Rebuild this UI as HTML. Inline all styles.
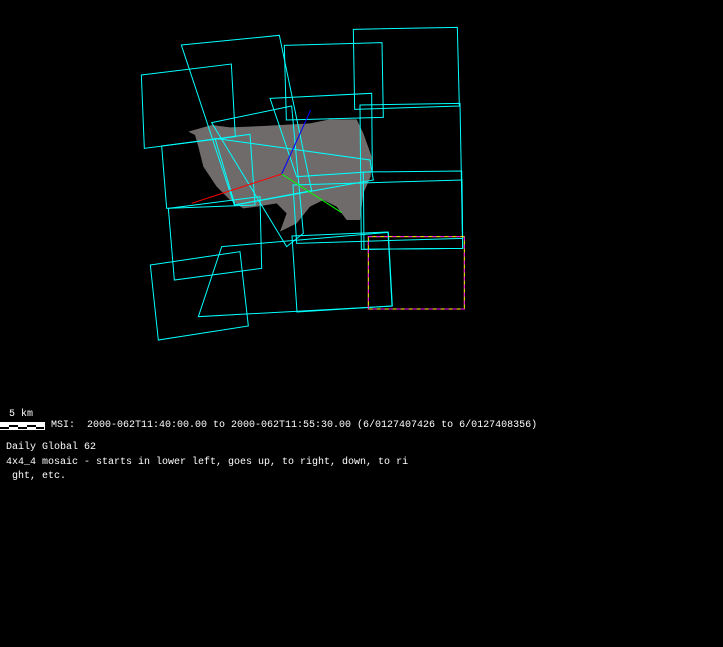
<!DOCTYPE html>
<html><head><style>
html,body{margin:0;padding:0;background:#000;width:723px;height:647px;overflow:hidden}
.t{position:absolute;font-family:"Liberation Mono",monospace;font-size:10px;color:#fff;white-space:pre;line-height:14.5px}
</style></head><body>
<svg width="723" height="647" style="position:absolute;left:0;top:0">
<g transform="translate(130,20) scale(0.33333)">
<polygon fill="#6f6b6b" points="175,335 245,315 300,322 400,318 540,310 600,298 680,298 700,340 725,410 722,470 700,520 690,600 650,600 620,560 580,540 540,560 500,610 450,635 470,580 440,550 380,560 340,565 300,540 260,500 220,440 205,380 195,345"/>
<g fill="none" stroke="#00ffff" stroke-width="3">
<polygon points="670,28 982,22 988,258 674,268"/>
<polygon points="463,76 756,68 760,292 469,300"/>
<polygon points="154,75 448,46 545,512 313,555"/>
<polygon points="34,165 304,132 316,350 43,385"/>
<polygon points="420,235 725,220 727,455 500,470"/>
<polygon points="690,255 990,250 998,685 694,688"/>
<polygon points="95,378 360,343 375,555 110,565"/>
<polygon points="115,565 390,530 395,745 133,780"/>
<polygon points="61,735 330,695 355,918 85,960"/>
<polygon points="275,680 775,637 787,858 205,890"/>
<polygon points="486,648 774,636 786,858 501,876"/>
<polygon points="489,495 996,480 998,655 500,670"/>
<polygon points="700,456 995,453 998,685 702,688"/>
<polygon points="245,308 485,258 520,640 470,680"/>
<polygon points="255,355 720,420 730,480 315,555"/>
</g>
<line x1="455" y1="462" x2="185" y2="550" stroke="#ff0000" stroke-width="3"/>
<line x1="455" y1="462" x2="635" y2="578" stroke="#00ff00" stroke-width="3"/>
<line x1="455" y1="462" x2="542" y2="270" stroke="#0000ff" stroke-width="3"/>
<rect x="715" y="650" width="288" height="217" fill="none" stroke="#ffff00" stroke-width="3"/>
<rect x="715" y="650" width="288" height="217" fill="none" stroke="#ff00ff" stroke-width="3" stroke-dasharray="12,12"/>
</g>
<line x1="0" y1="422.5" x2="45" y2="422.5" stroke="#fff"/>
<rect x="0" y="423" width="45" height="7" fill="#fff"/>
<rect x="9" y="425" width="9" height="2" fill="#000"/>
<rect x="27" y="425" width="9" height="2" fill="#000"/>
<rect x="0" y="427" width="9" height="2" fill="#000"/>
<rect x="18" y="427" width="9" height="2" fill="#000"/>
<rect x="36" y="427" width="8" height="2" fill="#000"/>
</svg>
<div class="t" style="left:9px;top:408px">5 km</div>
<div class="t" style="left:51px;top:419px">MSI:  2000-062T11:40:00.00 to 2000-062T11:55:30.00 (6/0127407426 to 6/0127408356)</div>
<div class="t" style="left:6px;top:441px">Daily Global 62
4x4_4 mosaic - starts in lower left, goes up, to right, down, to ri
 ght, etc.</div>
</body></html>
